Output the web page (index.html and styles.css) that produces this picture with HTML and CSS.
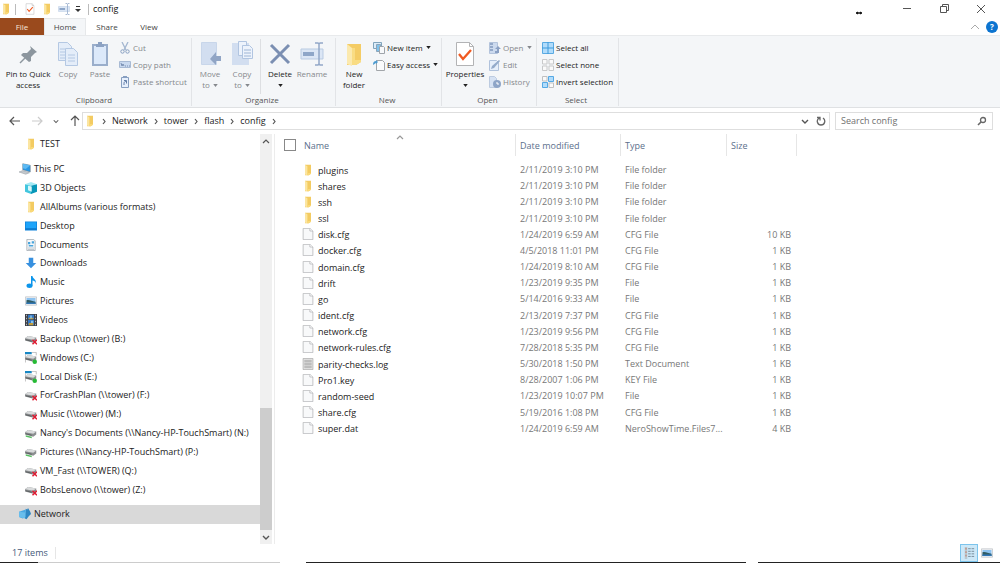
FILE: index.html
```
<!DOCTYPE html>
<html lang="en">
<head>
<meta charset="utf-8">
<title>config</title>
<link rel="stylesheet" href="styles.css">
</head>
<body>
<svg class="defs" aria-hidden="true">
  <symbol id="folder" viewBox="0 0 16 16"><path d="M4 1h8v12l-3 2H4z" fill="#f3cb62"/><path d="M4 1l3 2v12l-3-1z" fill="#fbe5a1"/><path d="M7 3h1v9h4v1l-3 2H7z" fill="#fad978"/></symbol>
  <symbol id="file" viewBox="0 0 16 16"><path d="M1.500.5h9l4 3.500v11.500h-13z" fill="#f8f9fa" stroke="#b2b3b5"/><path d="M10.500.5v3.500h4" fill="#fff" stroke="#b2b3b5"/></symbol>
  <symbol id="log" viewBox="0 0 16 16"><path d="M1.500.5h13v15h-13z" fill="#eee" stroke="#a5a5a5"/><path d="M3 3h10M3 5h10M3 7h10M3 9h10M3 11h10M3 13h10" stroke="#aaa" stroke-width="1.300"/></symbol>
  <symbol id="pc" viewBox="0 0 16 16"><path d="M5 1l10 2v9L5 9z" fill="#2797e6" stroke="#777" stroke-width=".7"/><path d="M5 1l10 2-6 5-4-1z" fill="#5dbaf3"/><path d="M0 12l5-2 9 3-5 2z" fill="#c4c9ce" stroke="#8a9199" stroke-width=".6"/></symbol>
  <symbol id="cube" viewBox="0 0 16 16"><path d="M0 3l8-3 8 3-8 2z" fill="#a6eaf5"/><path d="M0 3l8 2v11l-8-3z" fill="#43c6de"/><path d="M16 3L8 5v11l8-3z" fill="#0797b9"/><path d="M4 5l5 1v7l-5-2z" fill="#d9f7fb"/></symbol>
  <symbol id="desktop" viewBox="0 0 16 16"><path d="M0 2h16v12H0z" fill="#0e83db"/><path d="M1 3h14v8H1z" fill="#1ea4fa"/><path d="M1 12h14" stroke="#1272bd"/></symbol>
  <symbol id="docs" viewBox="0 0 16 16"><path d="M2.500.5h9l2 2v13h-11z" fill="#f6f8fa" stroke="#98a1a8"/><path d="M4 4h3v3H4zM9 3h3v3H9zM5 8h6v2H5z" fill="#4aa5dc"/><path d="M4 12h8M4 14h8" stroke="#aeb8c0"/></symbol>
  <symbol id="download" viewBox="0 0 16 16"><path d="M5 1h6v7h4l-7 7-7-7h4z" fill="#3790df"/></symbol>
  <symbol id="music" viewBox="0 0 16 16"><ellipse cx="6" cy="13" rx="4" ry="3" fill="#0c95eb"/><path d="M8 13V0h2c0 4 6 4 4 10 0-3-2-4-4-4v7z" fill="#0c95eb"/></symbol>
  <symbol id="pictures" viewBox="0 0 16 16"><path d="M.5 2.500h15v11H.5z" fill="#f4f6f8" stroke="#b8bdc2"/><path d="M2 4h12v8H2z" fill="#8cc2f0"/><path d="M2 7c4-1 7 1 12 2v3H2z" fill="#315c64"/><path d="M2 10h12v2H2z" fill="#3077b8"/></symbol>
  <symbol id="videos" viewBox="0 0 16 16"><path d="M0 0h16v16H0z" fill="#3d4047"/><path d="M4 1h8v6H4zM4 8h8v7H4z" fill="#3477c4"/><path d="M5 5h6v2H5zM5 12h6v3H5z" fill="#c49b38"/><path d="M7 2h2v4H7zM8 9h3v3H8z" fill="#85c2e8"/><path d="M2 1v15M14 1v15" stroke="#d6d9dc" stroke-dasharray="2 2"/></symbol>
  <symbol id="drive" viewBox="0 0 16 16"><path d="M0 7l4-3 11 2v4l-4 3L0 10z" fill="#8b8e90"/><path d="M0 7l4-3 11 2-4 3z" fill="#d9dbdc"/><path d="M1 9l8 2" stroke="#4e5153"/></symbol>
  <symbol id="drive-off" viewBox="0 0 16 16"><use href="#drive"/><path d="M10 9l6 6M16 9l-6 6" stroke="#e01b32" stroke-width="2"/></symbol>
  <symbol id="drive-net" viewBox="0 0 16 16"><use href="#drive"/><path d="M1 11l8 2v2l-8-2z" fill="#58bd62"/></symbol>
  <symbol id="drive-local" viewBox="0 0 16 16"><path d="M0 0h9v3H0z" fill="#1787c4"/><path d="M9 .5h6v4M.5 3v11" stroke="#aaa" fill="none"/><use href="#drive"/><circle cx="13" cy="13" r="3" fill="#26ba35"/></symbol>
  <symbol id="network" viewBox="0 0 16 16"><path d="M9 1l2 1 1-2 3 5 1 3-3 3-3 4-2-1z" fill="#2f86c2"/><path d="M0 5l9-3v10l-4 2-5-2z" fill="#48a8e3"/><path d="M0 5l8 1v8l-8-2z" fill="#68bdec"/></symbol>
  <symbol id="check" viewBox="0 0 22 26"><path d="M2.500 1.500h13l4 4v19h-17z" fill="#fff" stroke="#b2b3b5"/><path d="M15.500 1.500v4h4" fill="none" stroke="#b2b3b5"/><path d="M5 13l4 5 8-9" fill="none" stroke="#f05a22" stroke-width="2.300"/></symbol>
  <symbol id="rename" viewBox="0 0 24 24"><path d="M1 7h22v10H1z" fill="#dbe6f5" stroke="#b9cbe2"/><path d="M3 10h11v4H3z" fill="#8ea6c8"/><path d="M15 1h3l1 1 1-1h3M19 2v20M15 23h3l1-1 1 1h3" fill="none" stroke="#92a8c8" stroke-width="1.500"/></symbol>
  <symbol id="pin" viewBox="0 0 24 24"><path d="M14 4l7 6-2 1-4 4v4l-2 1-8-7 2-2h4l4-4z" fill="#8c969e"/><path d="M9 16l-5 5" stroke="#8c969e" stroke-width="1.500"/></symbol>
  <symbol id="copy" viewBox="0 0 22 26"><g fill="#e4edf9" stroke="#b4c8e3"><path d="M1.500 1.500h9l4 4v14h-13z"/><path d="M8.500 7.500h8l4 4v13h-12z"/></g><path d="M3 8h5M3 11h5M3 14h5M3 17h5M11 14h7M11 17h7M11 20h7" stroke="#b4c8e3"/></symbol>
  <symbol id="paste" viewBox="0 0 22 26"><path d="M4 4h14v20H4z" fill="#dce9fa" stroke="#9aaecb" stroke-width="2"/><path d="M7 3h2V1h4v2h2v3H7z" fill="#8ca2c3"/></symbol>
  <symbol id="move" viewBox="0 0 24 26"><path d="M3.500 1.500h15v22h-15z" fill="#d2def0" stroke="#c8d6ea"/><path d="M23 15v5h-5v4l-6-6 6-7v4z" fill="#91a5c5"/></symbol>
  <symbol id="copyto" viewBox="0 0 24 26"><path d="M2 2h17v22H2z" fill="#d2def0"/><g fill="#edf3fc" stroke="#b1c5e1"><path d="M8.500.5h8v14h-8z"/><path d="M12.500 4.500h7l3 3v10h-10z"/></g><path d="M14 9h7M14 12h7M14 15h7" stroke="#9eb5d5"/></symbol>
  <symbol id="delete" viewBox="0 0 24 26"><path d="M3 4l18 18M21 4L3 22" stroke="#7b8fb2" stroke-width="3"/></symbol>
  <symbol id="bigfolder" viewBox="0 0 22 26"><path d="M4 3h14v18l-5 3H4z" fill="#f4cc65"/><path d="M4 3l5 4v18l-5-2z" fill="#fbe9ae"/><path d="M9 7h3v12h6v2l-5 3H9z" fill="#f9dc83"/></symbol>
  <symbol id="cut" viewBox="0 0 12 12"><path d="M3 0l4 8M9 0L5 8" stroke="#a3b6d0" stroke-width="1.300"/><circle cx="3.500" cy="9.500" r="1.700" fill="none" stroke="#879fc1"/><circle cx="8.500" cy="9.500" r="1.700" fill="none" stroke="#879fc1"/></symbol>
  <symbol id="path" viewBox="0 0 12 12"><path d="M.5 2.500h11v6H.5z" fill="#c9d9ef" stroke="#a8bad4"/><path d="M2 4l1 3 1-2 1 2M6 7h1M8 7h1M10 7h1" fill="none" stroke="#6f87ab" stroke-width=".9"/></symbol>
  <symbol id="shortcut" viewBox="0 0 12 12"><path d="M2.500 1.500h7v10h-7z" fill="#e6effc" stroke="#879fc1"/><path d="M4 0h4v2H4z" fill="#879fc1"/><path d="M5 9c0-3 0-3 2-4M5 4.500h2.500v3" fill="none" stroke="#617da7"/></symbol>
  <symbol id="newitem" viewBox="0 0 12 12"><path d="M.5.5h8v6h-8z" fill="#dcecf8" stroke="#7fa3bc"/><path d="M3.500 2.500h4v7h-4z" fill="#7ec2ec" stroke="#8ca4b8"/><path d="M6.500 4.500h4l1 1v6h-5z" fill="#f7f9fb" stroke="#9ea4aa"/></symbol>
  <symbol id="easy" viewBox="0 0 12 12"><path d="M3.500 1.500h6l2 2v8h-8z" fill="#fafbfc" stroke="#a2a6aa"/><path d="M0 6c0-3 1-4 3-4V1l2 2-2 2V4z" fill="#4d9bd0"/></symbol>
  <symbol id="open" viewBox="0 0 12 12"><path d="M.5.5h8v11h-8z" fill="#ccdaee" stroke="#b4c4dc"/><path d="M1 2h3M1 5h3M1 8h3" stroke="#94a9c9" stroke-width="2"/><path d="M9 4l3 3h-2v4H6V9h2V7H6z" fill="#8aa0c3"/></symbol>
  <symbol id="edit" viewBox="0 0 12 12"><path d="M.5 1.500h7l2 2v8h-9z" fill="#e6effb" stroke="#b0c2dc"/><path d="M2 10l1-3 7-6 1 1-6 7z" fill="#94abcb"/></symbol>
  <symbol id="history" viewBox="0 0 12 12"><path d="M.5.5h5l2 2v9h-7z" fill="#d6e2f3" stroke="#bccbe0"/><circle cx="8" cy="8" r="4" fill="#8ea5c7"/><path d="M8 6v2h2" fill="none" stroke="#fff"/></symbol>
  <symbol id="all" viewBox="0 0 12 12"><path d="M.5.5h11v11H.5z" fill="#b1dcfb" stroke="#5aaae2"/><path d="M6 0v12M0 6h12" stroke="#3e9bdc"/></symbol>
  <symbol id="none" viewBox="0 0 12 12"><path d="M.5.5h4.500v4.500H.5zM7 .5h4.500v4.500H7zM.5 7h4.500v4.500H.5zM7 7h4.500v4.500H7z" fill="#fafafa" stroke="#c8c9ca"/></symbol>
  <symbol id="invert" viewBox="0 0 12 12"><path d="M.5.5h4.500v4.500H.5zM7 7h4.500v4.500H7z" fill="#fafafa" stroke="#bfc0c1"/><path d="M6.500.5h5v5h-5zM.5 6.500h5v5h-5z" fill="#b1dcfb" stroke="#55a9e4"/></symbol>
  <symbol id="down" viewBox="0 0 6 4"><path d="M0 0h6L3 4z" fill="currentColor"/></symbol>
  <symbol id="chev" viewBox="0 0 8 8"><path d="M1 3l3 3 3-3" fill="none" stroke="currentColor" stroke-width="1.400"/></symbol>
  <symbol id="right" viewBox="0 0 8 8"><path d="M3 2l2 2.500L3 7" fill="none" stroke="currentColor" stroke-width="1.200"/></symbol>
  <symbol id="up" viewBox="0 0 8 8"><path d="M1 6l3-3 3 3" fill="none" stroke="currentColor" stroke-width="1.200"/></symbol>
  <symbol id="arrow" viewBox="0 0 12 12"><path d="M11 6H1M5 2L1 6l4 4" fill="none" stroke="currentColor" stroke-width="1.200"/></symbol>
</svg>

<div class="window">
  <header class="titlebar">
    <svg class="i12"><use href="#folder"/></svg><i class="bar"></i>
    <button class="quick" aria-label="Properties"><svg class="i12"><use href="#check"/></svg></button>
    <button class="quick" aria-label="New folder"><svg class="i12"><use href="#folder"/></svg></button>
    <button class="quick" aria-label="Rename"><svg class="i12"><use href="#rename"/></svg></button>
    <button class="more" aria-label="Customize"><svg viewBox="0 0 6 6"><path d="M1 .5h4" stroke="#333"/><path d="M0 3h6L3 6z" fill="#333"/></svg></button>
    <i class="bar"></i><h1>config</h1>
    <svg class="resize" viewBox="0 0 8 6"><path d="M1 3l2-1v2zM7 3L5 2v2zM2 3h4" fill="#111" stroke="#111"/></svg>
    <button class="win" aria-label="Minimize"><svg viewBox="0 0 10 10"><path d="M1 4.500h8" stroke="#555"/></svg></button>
    <button class="win" aria-label="Restore"><svg viewBox="0 0 10 10"><path d="M1.500 2.500h6v6h-6zM3.500 2.500v-2h6v6h-2" fill="none" stroke="#555"/></svg></button>
    <button class="win" aria-label="Close"><svg viewBox="0 0 10 10"><path d="M1 1l8 8M9 1L1 9" stroke="#555"/></svg></button>
  </header>
  <nav class="tabs">
    <button class="tab file">File</button><button class="tab active">Home</button><button class="tab">Share</button><button class="tab">View</button>
    <button class="collapse" aria-label="Collapse ribbon"><svg viewBox="0 0 10 6"><path d="M1 5l4-4 4 4" fill="none" stroke="#aaa"/></svg></button>
    <button class="help" aria-label="Help">?</button>
  </nav>

  <section class="ribbon">
    <div class="group clipboard"><div class="tools">
      <button class="big wide"><svg><use href="#pin"/></svg>Pin to Quick<br>access</button>
      <button class="big off"><svg><use href="#copy"/></svg>Copy</button>
      <button class="big off"><svg><use href="#paste"/></svg>Paste</button>
      <div class="stack">
        <button class="small off"><svg><use href="#cut"/></svg>Cut</button>
        <button class="small off"><svg><use href="#path"/></svg>Copy path</button>
        <button class="small off"><svg><use href="#shortcut"/></svg>Paste shortcut</button>
      </div></div><h2>Clipboard</h2></div>
    <div class="group organize"><div class="tools">
      <button class="big off"><svg><use href="#move"/></svg>Move<span>to <svg class="dd"><use href="#down"/></svg></span></button>
      <button class="big off"><svg><use href="#copyto"/></svg>Copy<span>to <svg class="dd"><use href="#down"/></svg></span></button>
      <i class="rule"></i>
      <button class="big"><svg><use href="#delete"/></svg>Delete<span><svg class="dd"><use href="#down"/></svg></span></button>
      <button class="big off"><svg><use href="#rename"/></svg>Rename</button>
      </div><h2>Organize</h2></div>
    <div class="group new"><div class="tools">
      <button class="big"><svg><use href="#bigfolder"/></svg>New<br>folder</button>
      <div class="stack">
        <button class="small"><svg><use href="#newitem"/></svg>New item<svg class="dd"><use href="#down"/></svg></button>
        <button class="small"><svg><use href="#easy"/></svg>Easy access<svg class="dd"><use href="#down"/></svg></button>
      </div></div><h2>New</h2></div>
    <div class="group opening"><div class="tools">
      <button class="big mid"><svg><use href="#check"/></svg>Properties<span><svg class="dd"><use href="#down"/></svg></span></button>
      <div class="stack">
        <button class="small off"><svg><use href="#open"/></svg>Open<svg class="dd"><use href="#down"/></svg></button>
        <button class="small off"><svg><use href="#edit"/></svg>Edit</button>
        <button class="small off"><svg><use href="#history"/></svg>History</button>
      </div></div><h2>Open</h2></div>
    <div class="group select"><div class="tools">
      <div class="stack">
        <button class="small"><svg><use href="#all"/></svg>Select all</button>
        <button class="small"><svg><use href="#none"/></svg>Select none</button>
        <button class="small"><svg><use href="#invert"/></svg>Invert selection</button>
      </div></div><h2>Select</h2></div>
  </section>

  <div class="address">
    <div class="history">
      <button aria-label="Back"><svg class="i12"><use href="#arrow"/></svg></button>
      <button class="dim" aria-label="Forward"><svg class="i12 flip"><use href="#arrow"/></svg></button>
      <button aria-label="Recent"><svg class="i6"><use href="#chev"/></svg></button>
      <button aria-label="Up"><svg class="i12 turn"><use href="#arrow"/></svg></button>
    </div>
    <div class="crumbs">
      <svg class="i12"><use href="#folder"/></svg>
      <svg class="i8"><use href="#right"/></svg><a href="#">Network</a>
      <svg class="i8"><use href="#right"/></svg><a href="#">tower</a>
      <svg class="i8"><use href="#right"/></svg><a href="#">flash</a>
      <svg class="i8"><use href="#right"/></svg><a href="#">config</a>
      <svg class="i8"><use href="#right"/></svg>
      <button class="drop" aria-label="Previous locations"><svg class="i8"><use href="#chev"/></svg></button>
      <button class="refresh" aria-label="Refresh"><svg class="i10" viewBox="0 0 10 10"><path d="M1 1.500h3v3M3.500 2c-4 2-2 7 1.500 7 4 0 5-5 2-7" fill="none" stroke="#666" stroke-width="1.300"/></svg></button>
    </div>
    <div class="search"><input type="text" placeholder="Search config" aria-label="Search config"><svg class="i10" viewBox="0 0 10 10"><circle cx="6" cy="4" r="2.500" fill="none" stroke="#666" stroke-width="1.300"/><path d="M4 6L1 9" stroke="#666" stroke-width="1.600"/></svg></div>
  </div>

  <main class="body">
    <nav class="tree">
      <a href="#"><svg><use href="#folder"/></svg>TEST</a>
      <a href="#" class="root"><svg><use href="#pc"/></svg>This PC</a>
      <a href="#"><svg><use href="#cube"/></svg>3D Objects</a>
      <a href="#"><svg><use href="#folder"/></svg>AllAlbums (various formats)</a>
      <a href="#"><svg><use href="#desktop"/></svg>Desktop</a>
      <a href="#"><svg><use href="#docs"/></svg>Documents</a>
      <a href="#"><svg><use href="#download"/></svg>Downloads</a>
      <a href="#"><svg><use href="#music"/></svg>Music</a>
      <a href="#"><svg><use href="#pictures"/></svg>Pictures</a>
      <a href="#"><svg><use href="#videos"/></svg>Videos</a>
      <a href="#"><svg><use href="#drive-off"/></svg>Backup (\\tower) (B:)</a>
      <a href="#"><svg><use href="#drive-local"/></svg>Windows (C:)</a>
      <a href="#"><svg><use href="#drive-local"/></svg>Local Disk (E:)</a>
      <a href="#"><svg><use href="#drive-off"/></svg>ForCrashPlan (\\tower) (F:)</a>
      <a href="#"><svg><use href="#drive-off"/></svg>Music (\\tower) (M:)</a>
      <a href="#"><svg><use href="#drive-net"/></svg>Nancy's Documents (\\Nancy-HP-TouchSmart) (N:)</a>
      <a href="#"><svg><use href="#drive-net"/></svg>Pictures (\\Nancy-HP-TouchSmart) (P:)</a>
      <a href="#"><svg><use href="#drive-off"/></svg>VM_Fast (\\TOWER) (Q:)</a>
      <a href="#"><svg><use href="#drive-off"/></svg>BobsLenovo (\\tower) (Z:)</a>
      <a href="#" class="root current"><svg><use href="#network"/></svg>Network</a>
    </nav>
    <div class="scroll"><button aria-label="Scroll up"><svg class="i8"><use href="#up"/></svg></button><div class="track"><div class="thumb"></div></div><button aria-label="Scroll down"><svg class="i8"><use href="#chev"/></svg></button></div>
    <section class="files">
      <table>
        <thead><tr><th class="pick"><input type="checkbox" aria-label="Select all items"></th><th class="name">Name<svg class="sort i8"><use href="#up"/></svg></th><th class="date">Date modified</th><th class="type">Type</th><th class="size">Size</th><th class="rest"></th></tr></thead>
        <tbody>
          <tr><td></td><td><svg><use href="#folder"/></svg>plugins</td><td>2/11/2019 3:10 PM</td><td>File folder</td><td></td></tr>
          <tr><td></td><td><svg><use href="#folder"/></svg>shares</td><td>2/11/2019 3:10 PM</td><td>File folder</td><td></td></tr>
          <tr><td></td><td><svg><use href="#folder"/></svg>ssh</td><td>2/11/2019 3:10 PM</td><td>File folder</td><td></td></tr>
          <tr><td></td><td><svg><use href="#folder"/></svg>ssl</td><td>2/11/2019 3:10 PM</td><td>File folder</td><td></td></tr>
          <tr><td></td><td><svg><use href="#file"/></svg>disk.cfg</td><td>1/24/2019 6:59 AM</td><td>CFG File</td><td>10 KB</td></tr>
          <tr><td></td><td><svg><use href="#file"/></svg>docker.cfg</td><td>4/5/2018 11:01 PM</td><td>CFG File</td><td>1 KB</td></tr>
          <tr><td></td><td><svg><use href="#file"/></svg>domain.cfg</td><td>1/24/2019 8:10 AM</td><td>CFG File</td><td>1 KB</td></tr>
          <tr><td></td><td><svg><use href="#file"/></svg>drift</td><td>1/23/2019 9:35 PM</td><td>File</td><td>1 KB</td></tr>
          <tr><td></td><td><svg><use href="#file"/></svg>go</td><td>5/14/2016 9:33 AM</td><td>File</td><td>1 KB</td></tr>
          <tr><td></td><td><svg><use href="#file"/></svg>ident.cfg</td><td>2/13/2019 7:37 PM</td><td>CFG File</td><td>1 KB</td></tr>
          <tr><td></td><td><svg><use href="#file"/></svg>network.cfg</td><td>1/23/2019 9:56 PM</td><td>CFG File</td><td>1 KB</td></tr>
          <tr><td></td><td><svg><use href="#file"/></svg>network-rules.cfg</td><td>7/28/2018 5:35 PM</td><td>CFG File</td><td>1 KB</td></tr>
          <tr><td></td><td><svg><use href="#log"/></svg>parity-checks.log</td><td>5/30/2018 1:50 PM</td><td>Text Document</td><td>1 KB</td></tr>
          <tr><td></td><td><svg><use href="#file"/></svg>Pro1.key</td><td>8/28/2007 1:06 PM</td><td>KEY File</td><td>1 KB</td></tr>
          <tr><td></td><td><svg><use href="#file"/></svg>random-seed</td><td>1/23/2019 10:07 PM</td><td>File</td><td>1 KB</td></tr>
          <tr><td></td><td><svg><use href="#file"/></svg>share.cfg</td><td>5/19/2016 1:08 PM</td><td>CFG File</td><td>1 KB</td></tr>
          <tr><td></td><td><svg><use href="#file"/></svg>super.dat</td><td>1/24/2019 6:59 AM</td><td>NeroShowTime.Files7...</td><td>4 KB</td></tr>
        </tbody>
      </table>
    </section>
  </main>
  <footer class="status">
    <span>17 items</span>
    <button class="view on" aria-label="Details view"><svg viewBox="0 0 14 14"><path d="M2 0h3v14H2z" fill="#bac8cf"/><path d="M3.500 1v2M3.500 5v2M3.500 9v2" stroke="#c8694d"/><path d="M6 2h3M10 2h3M6 5h3M10 5h3M6 8h3M10 8h3M6 11h3M10 11h3" stroke="#6c7f8d"/></svg></button>
    <button class="view" aria-label="Thumbnail view"><svg viewBox="0 0 16 16"><use href="#pictures"/></svg></button>
  </footer>
  <div class="edge"></div>
</div>
</body>
</html>
```
FILE: styles.css
```
* { box-sizing: border-box; }
body { margin: 0; font: 9px/12px "Open Sans", "Noto Sans", sans-serif; color: #222; background: #fff; }
button { border: 0; padding: 0; background: none; font: inherit; color: inherit; }
a { color: inherit; text-decoration: none; }
h1, h2 { margin: 0; font: inherit; }
svg { flex: none; }
.defs { position: absolute; width: 0; height: 0; }
.i6 { width: 6px; height: 6px; }
.i8 { width: 8px; height: 8px; }
.i10 { width: 10px; height: 10px; }
.i12 { width: 12px; height: 12px; }
.window { display: flex; flex-direction: column; height: 100vh; }

.titlebar { display: flex; align-items: center; height: 18px; }
.titlebar .bar { width: 1px; height: 11px; margin: 0 8px 0 3px; background: #bbb; }
.titlebar .bar + h1 { margin-left: -4px; color: #111; }
.quick { display: flex; margin-right: 5px; }
.more { display: flex; width: 6px; }
.more svg { width: 6px; height: 6px; }
.titlebar .more + .bar { margin-left: 7px; }
.resize { width: 8px; height: 6px; margin: 8px 25px 0 auto; }
.win { display: flex; justify-content: center; width: 37px; }
.win svg { width: 10px; height: 10px; }
.win:last-child { margin-right: 1px; }

.tabs { display: flex; height: 17px; font-size: 8px; align-items: stretch; }
.tab { width: 42px; color: #444; }
.tab.file { width: 44px; background: #9a4a1d; color: #f5e3d9; }
.tab.active { background: #f4f6f8; border: 1px solid #e6e8ea; border-bottom: 0; }
.collapse { display: flex; align-items: center; margin-left: auto; }
.collapse svg { width: 10px; height: 6px; }
.help { align-self: center; width: 12px; height: 12px; margin: 0 2px 0 6px; border-radius: 50%; background: #0c74d0; color: #fff; font-weight: 700; }

.ribbon { display: flex; height: 73px; padding: 2px 0 1px; background: #f4f6f8; border-top: 1px solid #e8eaec; border-bottom: 1px solid #dfe1e3; font-size: 8px; line-height: 11px; color: #222; }
.group { display: flex; flex-direction: column; border-right: 1px solid #e2e4e7; }
.clipboard { width: 192px; }
.clipboard .tools { padding-left: 4px; }
.organize { width: 144px; }
.new { width: 106px; }
.opening { width: 95px; }
.select { width: 82px; }
.tools { display: flex; flex: 1; padding-left: 2px; }
.group h2 { padding-right: 3px; text-align: center; color: #555; line-height: 12px; }
.big { display: flex; flex-direction: column; align-items: center; width: 32px; padding-top: 3px; white-space: nowrap; text-align: center; }
.big > svg { width: 24px; height: 26px; margin-bottom: 1px; }
.big.wide { width: 48px; }
.big.mid { width: 42px; }
.off { color: #85888c; }
.rule { width: 1px; margin: 1px 3px 0 2px; background: #dddfe2; }
.stack { display: flex; flex-direction: column; padding: 1px 0 0 3px; }
.small { display: flex; align-items: center; gap: 2px; height: 17px; white-space: nowrap; }
.small svg { width: 12px; height: 12px; }
svg.dd, .small svg.dd { width: 5px; height: 3px; margin-left: 1px; vertical-align: middle; }

.address { display: flex; align-items: center; height: 26px; padding: 0 7px 0 9px; }
.history { display: flex; align-items: center; width: 73px; gap: 10px; color: #555; }
.history button { display: flex; }
.history .dim { color: #ccc; }
.flip { transform: rotate(180deg); }
.turn { transform: rotate(90deg); }
.crumbs { display: flex; flex: 1; align-items: center; gap: 4px; height: 18px; padding-left: 1px; border: 1px solid #dedede; color: #222; }
.crumbs svg { color: #555; }
.crumbs .drop { margin-left: auto; display: flex; }
.refresh { display: flex; align-items: center; justify-content: center; align-self: stretch; width: 16px; }
.search { display: flex; align-items: center; width: 158px; height: 18px; margin-left: 5px; padding: 0 5px; border: 1px solid #dedede; }
.search input { flex: 1; min-width: 0; border: 0; padding: 0; outline: 0; font: inherit; }
.search input::placeholder { color: #707070; }

.body { display: flex; flex: 1; min-height: 0; }
.tree { display: flex; flex-direction: column; width: 260px; padding: 1px 0 20px; }
.tree a { display: flex; flex: 1; align-items: center; gap: 3px; padding-left: 25px; min-height: 0; white-space: nowrap; }
.tree svg { width: 12px; height: 12px; }
.tree .root { margin-top: 6px; padding-left: 19px; }
.tree .current { background: #d9d9d9; }
.scroll { display: flex; flex-direction: column; width: 12px; background: #f0f0f0; color: #555; }
.scroll button { display: flex; align-items: center; justify-content: center; height: 14px; }
.track { flex: 1; display: flex; align-items: flex-end; }
.thumb { width: 100%; height: 32%; background: #cdcdcd; }
.files { flex: 1; margin-left: 2px; border-left: 1px solid #ececec; }
table { width: 100%; height: 303px; border-collapse: separate; border-spacing: 0; table-layout: fixed; color: #777; }
th { height: 28px; padding: 0 0 4px 4px; font-weight: 400; text-align: left; color: #5b6f8c; background: linear-gradient(#e6e6e6, #e6e6e6) right top / 1px 22px no-repeat; }
th.pick { width: 26px; padding: 0 0 6px 9px; background: none; }
th.name { position: relative; width: 215px; padding-left: 3px; }
.sort { position: absolute; top: -1px; left: 95px; color: #999; }
th.date { width: 105px; }
th.type { width: 106px; }
th.size { width: 70px; }
th.rest { background: none; }
th input { appearance: none; display: block; width: 12px; height: 12px; margin: 0; border: 1px solid #888; background: #fff; }
td { padding: 0 0 0 4px; white-space: nowrap; }
td:nth-child(2) { padding-left: 1px; color: #222; }
td svg { width: 12px; height: 12px; margin-right: 4px; vertical-align: -2px; }
td:nth-child(5) { padding-right: 6px; text-align: right; }

.status { display: flex; align-items: center; height: 18px; padding: 0 4px 0 12px; color: #44597a; }
.status span { width: 44px; margin-right: auto; border-right: 1px solid #e6e6e6; }
.view { display: flex; align-items: center; justify-content: center; width: 18px; height: 18px; }
.view svg { width: 12px; height: 12px; }
.view.on { background: #cce8f8; border: 1px solid #7cc4ec; }
.edge { height: 1px; background: linear-gradient(to right, #222 38px, #ccc 38px 280px, #fff 280px 306px, #222 306px 746px, #fff 746px 758px, #222 758px); }
```
